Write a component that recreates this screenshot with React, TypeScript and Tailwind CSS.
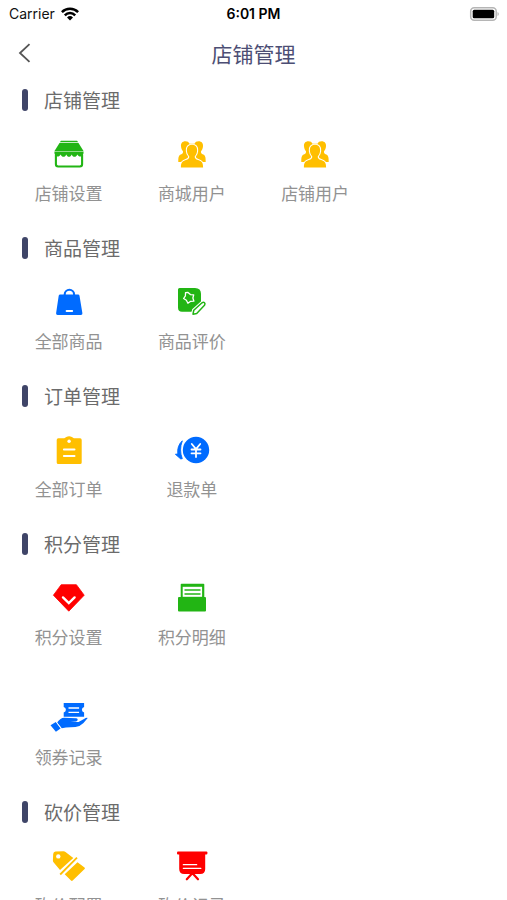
import React from "react";

type MenuItem = {
  label: string;
  icon: React.ReactNode;
};

type MenuSection = {
  id: string;
  title?: string;
  items: MenuItem[];
};

const GREEN = "#22b514";
const YELLOW = "#ffbf00";
const BLUE = "#006bff";
const RED = "#ff0000";

const Icon = ({ children }: { children: React.ReactNode }) => (
  <svg viewBox="0 0 40 40" className="size-10" fill="none" aria-hidden="true">
    {children}
  </svg>
);

const ShopIcon = () => (
  <Icon>
    <path d="M12 6.800h16l1.300 1.500H10.700z" fill={GREEN} />
    <path d="M10.500 9h19l5 8H5.500z" fill={GREEN} />
    <path
      d="M5.400 17.500h29.200c.2 3-1.300 5-3 5s-2.600-.9-3.200-2.100c-.8 1.500-1.700 2.300-2.900 2.300s-2.200-.9-2.800-2.300c-.7 1.400-1.500 2.300-2.700 2.300s-2-.9-2.700-2.300c-.7 1.400-1.600 2.300-2.800 2.300s-2.100-.8-2.900-2.300c-.6 1.100-1.500 2.100-3.200 2.100s-3.300-2-3-5z"
      fill={GREEN}
    />
    <path
      d="M6.900 21v9.300q0 2.200 2.200 2.200h21.800q2.200 0 2.200-2.200V21"
      stroke={GREEN}
      strokeWidth="2.100"
    />
  </Icon>
);

const UsersIcon = () => (
  <Icon>
    <path
      d="M13.500 7.200c-3.300 0-4.800 2.300-4.500 5 .2 2.200.8 3.800 1.900 4.900.5 1.900-.4 2.800-2.100 3.500-2 .8-2.600 2.500-2.500 7.300h27.400c.1-4.800-.5-6.500-2.500-7.300-1.700-.7-2.600-1.600-2.100-3.500 1.100-1.100 1.700-2.700 1.900-4.900.3-2.700-1.200-5-4.500-5-2 0-3.300.8-4 2.500h-5c-.7-1.700-2-2.500-4-2.500z"
      fill={YELLOW}
    />
    <path
      d="M20 10.800c-3.700 0-5.400 2.600-5.100 6 .2 2.600 1.100 4.200 2.300 5.400.4 2-.9 3-3.300 3.800-3.500 1.200-5 2.500-5 7.400h22.200c0-4.900-1.500-6.200-5-7.400-2.400-.8-3.700-1.800-3.300-3.800 1.200-1.200 2.100-2.800 2.300-5.400.3-3.400-1.400-6-5.100-6z"
      fill={YELLOW}
      stroke="#fff"
      strokeWidth="2.200"
      paintOrder="stroke"
    />
  </Icon>
);

const BagIcon = () => (
  <Icon>
    <path
      d="M15.700 14v-1.500a4.700 4.700 0 0 1 9.400 0V14"
      stroke={BLUE}
      strokeWidth="2.100"
    />
    <path
      d="M11.200 12.500h17.800q1.300 0 1.500 1.300l2.900 17.400q.2 1.800-1.500 1.800H8.600q-1.700 0-1.500-1.800l2.600-17.400q.2-1.300 1.500-1.300z"
      fill={BLUE}
    />
    <path
      d="M17.600 29h5.600"
      stroke="#fff"
      strokeWidth="1.900"
      strokeLinecap="round"
    />
  </Icon>
);

const ReviewIcon = () => (
  <Icon>
    <path
      d="M7.500 6H23q6 0 6 6v8l-9.500 9.800H10q-4 0-4-4V7.500Q6 6 7.500 6z"
      fill={GREEN}
    />
    <path
      d="M16 10.400l2.400 2.200 3.300.2-.8 3.200 1 3.200-3.200.1-2.800 1.900-1.500-3-2.800-1.700 1.800-2.600.1-3.200z"
      stroke="#fff"
      strokeWidth="1.300"
      strokeLinejoin="round"
    />
    <path
      d="M21 32.200l.8-4 8.200-7.400q1.500-1 2.500 0t0 2.500l-7.800 8.200z"
      fill="#fff"
      stroke="#fff"
      strokeWidth="3.600"
    />
    <path
      d="M21 32.200l.8-4 8.200-7.400q1.500-1 2.500 0t0 2.500l-7.800 8.200z"
      stroke={GREEN}
      strokeWidth="1.500"
      strokeLinejoin="round"
    />
  </Icon>
);

const OrderIcon = () => (
  <Icon>
    <path
      d="M9.300 8.300h6l2-1.300q2.800-1.300 5.600 0l2 1.300h6.200q1.600 0 1.600 1.600v22.600q0 1.600-1.600 1.600H9.300q-1.600 0-1.600-1.600V9.900q0-1.600 1.600-1.600z"
      fill={YELLOW}
    />
    <circle cx="20.100" cy="11.300" r="1.700" fill="#fff" />
    <path
      d="M14.900 19.400h10.600M14.900 26h10.600"
      stroke="#fff"
      strokeWidth="2"
      strokeLinecap="round"
    />
  </Icon>
);

const RefundIcon = () => (
  <Icon>
    <circle cx="24" cy="20" r="13.200" fill={BLUE} />
    <path
      d="M19.800 14l4.200 5 4.200-5M24 19v8M19.500 19.500h9M19.500 23.300h9"
      stroke="#fff"
      strokeWidth="1.800"
      strokeLinecap="round"
    />
    <path
      d="M10.300 10.800Q4.800 16 5.800 24l-2.400.3 5.300 4.600 1.600-.2Q6.800 20 10.300 10.800z"
      fill={BLUE}
      stroke={BLUE}
      strokeWidth=".9"
      strokeLinejoin="round"
    />
  </Icon>
);

const DiamondIcon = () => (
  <Icon>
    <path
      d="M12.200 6.700h15.200L35.200 17.200 19.800 33.200 4.400 17.200z"
      fill={RED}
      stroke={RED}
      strokeWidth=".8"
      strokeLinejoin="round"
    />
    <path
      d="M14 19.400l5.800 5.600 5.800-5.600"
      stroke="#fff"
      strokeWidth="2.400"
      strokeLinecap="round"
    />
  </Icon>
);

const RecordsIcon = () => (
  <Icon>
    <path d="M9.500 5.800h22q.8 0 .8.800V20H8.700V6.600q0-.8.800-.8z" fill={GREEN} />
    <path d="M10.700 8.800h19.400v10H10.700z" fill="#fff" />
    <path d="M12.500 12h16M12.500 16h16" stroke={GREEN} strokeWidth="1.500" />
    <rect x="6" y="19" width="28" height="14.400" rx="1" fill={GREEN} />
  </Icon>
);

const CouponIcon = () => (
  <Icon>
    <path
      d="M14.700 5h20.400v4q-2.200.7-2.200 2.800t2.200 2.800v4.100H14.700v-4.100q2.200-.7 2.200-2.800T14.700 9z"
      fill={BLUE}
    />
    <path d="M19.500 10h10.600M19.500 14.300h10.600" stroke="#fff" strokeWidth="1.300" />
    <path
      d="M8.100 24.400q3.400-4.500 7-4.600l12.200.5q1.500.2 1.400 1.500t-1.600 1.600l-5.600.5 8 .2 5.500-3.200q2.300-1.400 3.700-1l-4.200 5q-3.500 3.500-8 4l-9.500.6-4.300.8z"
      fill={BLUE}
    />
    <path d="M1.500 27.300l5.300-3.200 4.800 6.400-4.700 3.300z" fill={BLUE} />
    <path d="M7.300 23.900l5.200 6.800" stroke="#fff" strokeWidth=".7" />
  </Icon>
);

const TagIcon = () => (
  <Icon>
    <path
      d="M6.500 5.600l8-.4q1.200 0 2 .7l7.800 6.200L11 24l-6.500-7.700q-.6-.8-.6-1.800L4.200 8q.2-2.300 2.300-2.400z"
      fill={YELLOW}
    />
    <circle cx="9.300" cy="10.400" r="2.200" fill="#fff" />
    <path d="M28 11.700L11.200 28.500" stroke={YELLOW} strokeWidth="1.800" />
    <path
      d="M28.500 16.200l7 5.400q.9.700.1 1.500L23.700 34.500q-.9.800-1.700 0l-6.300-6.200z"
      fill={YELLOW}
    />
  </Icon>
);

const BoardIcon = () => (
  <Icon>
    <path d="M7.200 8h26v15q0 5-5 5h-16q-5 0-5-5z" fill={RED} />
    <rect x="5" y="5.500" width="30.400" height="3" rx="1" fill={RED} />
    <path
      d="M11.300 18.700h13.400M11.300 22.300h17.600"
      stroke="#fff"
      strokeWidth="1.200"
      strokeLinecap="round"
    />
    <path
      d="M19.600 28l-4.800 5.300M21.200 28l4.800 5.300"
      stroke={RED}
      strokeWidth="2.200"
      strokeLinecap="round"
    />
  </Icon>
);

const sections: MenuSection[] = [
  {
    id: "shop",
    title: "店铺管理",
    items: [
      { label: "店铺设置", icon: <ShopIcon /> },
      { label: "商城用户", icon: <UsersIcon /> },
      { label: "店铺用户", icon: <UsersIcon /> },
    ],
  },
  {
    id: "goods",
    title: "商品管理",
    items: [
      { label: "全部商品", icon: <BagIcon /> },
      { label: "商品评价", icon: <ReviewIcon /> },
    ],
  },
  {
    id: "order",
    title: "订单管理",
    items: [
      { label: "全部订单", icon: <OrderIcon /> },
      { label: "退款单", icon: <RefundIcon /> },
    ],
  },
  {
    id: "points",
    title: "积分管理",
    items: [
      { label: "积分设置", icon: <DiamondIcon /> },
      { label: "积分明细", icon: <RecordsIcon /> },
    ],
  },
  {
    // 没有标题的分组
    id: "coupon",
    items: [{ label: "领券记录", icon: <CouponIcon /> }],
  },
  {
    id: "bargain",
    title: "砍价管理",
    items: [
      { label: "砍价配置", icon: <TagIcon /> },
      { label: "砍价记录", icon: <BoardIcon /> },
    ],
  },
];

const StatusBar = () => (
  <div className="grid h-7 grid-cols-3 items-center px-2 font-['Inter','Liberation_Sans',sans-serif] text-sm">
    <div className="flex items-center gap-1.5 pl-px">
      <span className="font-normal text-[#111]">Carrier</span>
      <svg viewBox="0 0 18 14" className="h-3.5 w-[18px]" fill="none">
        <path
          d="M.9 5.100a11.500 11.500 0 0 1 16.200 0M3.800 8.300a7.300 7.300 0 0 1 10.400 0"
          stroke="#000"
          strokeWidth="2.500"
        />
        <path d="M9 13.600l-3-3.200a4.300 4.300 0 0 1 6 0z" fill="#000" />
      </svg>
    </div>
    <span className="text-center font-semibold text-black">6:01 PM</span>
    <svg viewBox="0 0 31 14" className="h-3.5 w-[31px] justify-self-end">
      <rect
        x="2.700"
        y=".8"
        width="25.500"
        height="12.400"
        rx="3.500"
        fill="#fff"
        stroke="#b5b5b5"
        strokeWidth="1.500"
      />
      <rect x="4.700" y="2.800" width="21.500" height="8.400" rx="1.500" fill="#000" />
      <path d="M29.500 5q1.300.6 1.300 2t-1.300 2z" fill="#b5b5b5" />
    </svg>
  </div>
);

const Section = ({ section }: { section: MenuSection }) => (
  <section className="pt-2 pb-3">
    {section.title && (
      <div className="flex h-7 items-center gap-4 pl-[22px]">
        <span className="h-[22px] w-1.5 rounded-full bg-[#3f4568]" />
        <h2 className="text-[19px] leading-7 text-[#6b6b6b]">
          {section.title}
        </h2>
      </div>
    )}
    <div className="grid grid-cols-4 px-[7px]">
      {section.items.map((item) => (
        <button
          key={item.label}
          type="button"
          className="flex cursor-pointer flex-col items-center gap-[7px] pt-5 pb-[9px]"
        >
          {item.icon}
          <span className="text-[17px] leading-6 text-[#929292]">
            {item.label}
          </span>
        </button>
      ))}
    </div>
  </section>
);

const App = () => {
  return (
    <div className="min-h-screen bg-white font-['Noto_Sans_CJK_SC',sans-serif] font-normal">
      <StatusBar />
      <header className="grid h-[50px] grid-cols-[48px_1fr_48px] items-center">
        <button
          type="button"
          aria-label="返回"
          className="flex cursor-pointer justify-center"
        >
          <svg viewBox="0 0 20 20" className="size-5" fill="none">
            <path d="M15.500 1.200L6 10l9.500 8.800" stroke="#555" strokeWidth="1.800" />
          </svg>
        </button>
        <h1 className="text-center text-[21px] leading-7 text-[#4c4e74]">
          店铺管理
        </h1>
      </header>
      <main>
        {sections.map((section) => (
          <Section key={section.id} section={section} />
        ))}
      </main>
    </div>
  );
};

export default App;
